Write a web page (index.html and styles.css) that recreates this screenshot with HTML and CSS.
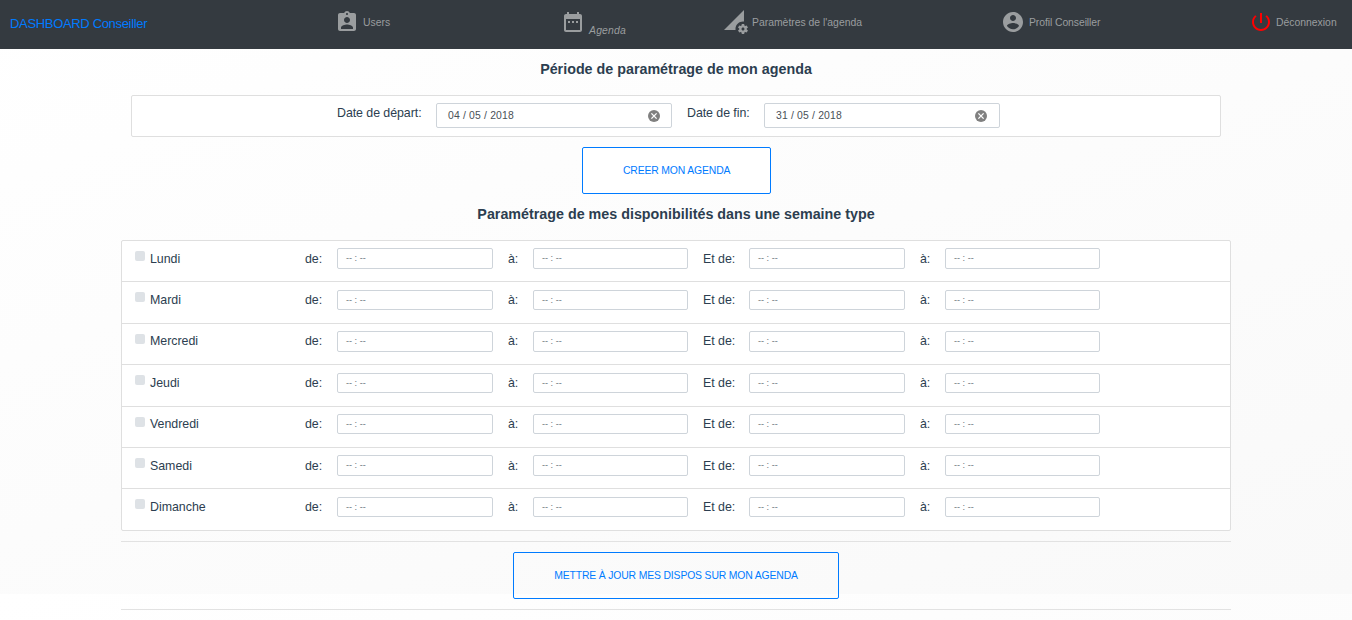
FILE: index.html
```
<!DOCTYPE html>
<html lang="fr">
<head>
<meta charset="utf-8">
<title>Dashboard Conseiller</title>
<link rel="stylesheet" href="styles.css">
</head>
<body>
<nav class="navbar">
  <a class="brand">DASHBOARD Conseiller</a>
  <a class="nav-link users"><svg class="icon" viewBox="0 0 24 24"><path d="M19 3h-4.180C14.400 1.840 13.300 1 12 1s-2.400.84-2.820 2H5c-1.100 0-2 .9-2 2v14c0 1.100.9 2 2 2h14c1.100 0 2-.9 2-2V5c0-1.100-.9-2-2-2zm-7 0c.55 0 1 .45 1 1s-.45 1-1 1-1-.45-1-1 .45-1 1-1zm0 4c1.660 0 3 1.340 3 3s-1.340 3-3 3-3-1.340-3-3 1.340-3 3-3zm6 12H6v-1.400c0-2 4-3.100 6-3.100s6 1.100 6 3.100V19z"/></svg><span>Users</span></a>
  <a class="nav-link agenda"><svg class="icon" viewBox="0 0 24 24"><path d="M9 11H7v2h2v-2zm4 0h-2v2h2v-2zm4 0h-2v2h2v-2zm2-7h-1V2h-2v2H8V2H6v2H5c-1.110 0-1.990.9-1.990 2L3 20c0 1.100.89 2 2 2h14c1.100 0 2-.9 2-2V6c0-1.100-.9-2-2-2zm0 16H5V9h14v11z"/></svg><em>Agenda</em></a>
  <a class="nav-link params"><svg class="icon" viewBox="0 0 24 24"><path d="M18.990 11.500c.34 0 .67.03 1 .07L20 0 0 20h11.560c-.04-.33-.07-.66-.07-1 0-4.140 3.360-7.500 7.500-7.500zm3.710 7.990c.02-.16.04-.32.04-.49 0-.17-.01-.33-.04-.49l1.060-.83c.09-.08.12-.21.06-.32l-1-1.730c-.06-.11-.19-.15-.31-.11l-1.240.5c-.26-.2-.54-.37-.85-.49l-.19-1.320c-.01-.12-.12-.21-.24-.21h-2c-.12 0-.23.09-.25.21l-.19 1.320c-.3.13-.59.29-.85.49l-1.240-.5c-.11-.04-.24 0-.31.11l-1 1.730c-.06.11-.04.24.06.32l1.060.83c-.02.16-.03.32-.03.49 0 .17.01.33.03.49l-1.060.83c-.09.08-.12.21-.06.32l1 1.730c.06.11.19.15.31.11l1.240-.5c.26.2.54.37.85.49l.19 1.320c.02.12.12.21.25.21h2c.12 0 .23-.09.24-.21l.19-1.320c.3-.13.59-.29.84-.49l1.250.5c.11.04.24 0 .31-.11l1-1.730c.06-.11.03-.24-.06-.32l-1.060-.83zm-3.710 1.010c-.83 0-1.500-.67-1.500-1.500s.67-1.500 1.500-1.500 1.500.67 1.500 1.500-.67 1.500-1.500 1.500z"/></svg><span>Paramètres de l'agenda</span></a>
  <a class="nav-link profil"><svg class="icon" viewBox="0 0 24 24"><path d="M12 2C6.480 2 2 6.480 2 12s4.480 10 10 10 10-4.480 10-10S17.520 2 12 2zm0 3c1.660 0 3 1.340 3 3s-1.340 3-3 3-3-1.340-3-3 1.340-3 3-3zm0 14.200c-2.500 0-4.710-1.280-6-3.220.03-1.990 4-3.080 6-3.080 1.990 0 5.970 1.090 6 3.080-1.290 1.940-3.500 3.220-6 3.220z"/></svg><span>Profil Conseiller</span></a>
  <a class="nav-link logout"><svg class="icon" viewBox="0 0 24 24"><path d="M13 3h-2v10h2V3zm4.830 2.170l-1.420 1.420C17.990 7.860 19 9.810 19 12c0 3.870-3.130 7-7 7s-7-3.130-7-7c0-2.190 1.010-4.140 2.580-5.420L6.170 5.170C4.230 6.820 3 9.260 3 12c0 4.970 4.030 9 9 9s9-4.030 9-9c0-2.740-1.230-5.180-3.170-6.830z"/></svg><span>Déconnexion</span></a>
</nav>
<main>
  <h1 class="title">Période de paramétrage de mon agenda</h1>
  <section class="card period">
    <span class="label">Date de départ:</span>
    <div class="date start"><span>04 / 05 / 2018</span><svg class="clear" viewBox="0 0 12 12"><circle cx="6" cy="6" r="6"/><path d="M3.400 3.400l5.200 5.200M8.600 3.400l-5.200 5.200"/></svg></div>
    <span class="label end">Date de fin:</span>
    <div class="date"><span>31 / 05 / 2018</span><svg class="clear" viewBox="0 0 12 12"><circle cx="6" cy="6" r="6"/><path d="M3.400 3.400l5.200 5.200M8.600 3.400l-5.200 5.200"/></svg></div>
  </section>
  <button class="btn create">CREER MON AGENDA</button>
  <h2 class="title week-title">Paramétrage de mes disponibilités dans une semaine type</h2>
  <section class="card week">
    <div class="day"><i class="check"></i><span class="name">Lundi</span><span>de:</span><div class="time">-- : --</div><span>à:</span><div class="time">-- : --</div><span>Et de:</span><div class="time">-- : --</div><span>à:</span><div class="time">-- : --</div></div>
    <div class="day"><i class="check"></i><span class="name">Mardi</span><span>de:</span><div class="time">-- : --</div><span>à:</span><div class="time">-- : --</div><span>Et de:</span><div class="time">-- : --</div><span>à:</span><div class="time">-- : --</div></div>
    <div class="day"><i class="check"></i><span class="name">Mercredi</span><span>de:</span><div class="time">-- : --</div><span>à:</span><div class="time">-- : --</div><span>Et de:</span><div class="time">-- : --</div><span>à:</span><div class="time">-- : --</div></div>
    <div class="day"><i class="check"></i><span class="name">Jeudi</span><span>de:</span><div class="time">-- : --</div><span>à:</span><div class="time">-- : --</div><span>Et de:</span><div class="time">-- : --</div><span>à:</span><div class="time">-- : --</div></div>
    <div class="day"><i class="check"></i><span class="name">Vendredi</span><span>de:</span><div class="time">-- : --</div><span>à:</span><div class="time">-- : --</div><span>Et de:</span><div class="time">-- : --</div><span>à:</span><div class="time">-- : --</div></div>
    <div class="day"><i class="check"></i><span class="name">Samedi</span><span>de:</span><div class="time">-- : --</div><span>à:</span><div class="time">-- : --</div><span>Et de:</span><div class="time">-- : --</div><span>à:</span><div class="time">-- : --</div></div>
    <div class="day"><i class="check"></i><span class="name">Dimanche</span><span>de:</span><div class="time">-- : --</div><span>à:</span><div class="time">-- : --</div><span>Et de:</span><div class="time">-- : --</div><span>à:</span><div class="time">-- : --</div></div>
  </section>
  <div class="update"><button class="btn">METTRE À JOUR MES DISPOS SUR MON AGENDA</button></div>
</main>
</body>
</html>
```
FILE: styles.css
```
* { box-sizing: border-box; }
html { background: #fff linear-gradient(160deg, #fff 0%, #f9f9f9 100%) 0 0 / 100% 594px repeat-y; }
body {
  margin: 0;
  height: 620px;
  overflow: hidden;
  color: #2c3e50;
  font: 12.4px/18px "Liberation Sans", Arial, sans-serif;
}
.navbar {
  display: grid;
  grid-template-columns: 325px 226px 163px 277px 248px 1fr;
  height: 49px;
  padding-left: 10px;
  background: #343a40;
}
.brand { padding-top: 14px; color: #007bff; font-size: 13px; line-height: 20px; letter-spacing: -0.33px; }
.nav-link {
  display: flex;
  align-items: flex-start;
  gap: 4px;
  color: #9a9d9f;
  font-size: 10.4px;
  line-height: 16px;
  white-space: nowrap;
}
.icon { flex: none; width: 24px; height: 24px; margin-top: 10px; fill: currentColor; }
.nav-link span { padding-top: 15px; }
.nav-link em { padding-top: 23px; letter-spacing: 0.2px; }
.profil { letter-spacing: -0.08px; }
.logout { gap: 3px; }
.logout .icon { fill: #f00; }

main { display: flex; flex-direction: column; width: 1110px; margin: 0 auto; }
.title { margin: 11px 0 0; text-align: center; font-size: 14.3px; line-height: 18px; font-weight: 700; }
.card { background: #fff; border: 1px solid #dfdfdf; border-radius: 2px; }
.period {
  display: flex;
  align-items: flex-start;
  height: 42px;
  margin: 17px 10px 0;
  padding: 7px 0 0 205px;
}
.label { width: 99px; margin-top: 1px; white-space: nowrap; letter-spacing: -0.06px; }
.label.end { width: 77px; margin-left: 15px; }
.date {
  display: flex;
  align-items: center;
  justify-content: space-between;
  width: 236px;
  height: 25px;
  padding: 0 12px 0 11px;
  border: 1px solid #ced4da;
  border-radius: 2px;
  color: #495057;
  font-size: 10.4px;
  letter-spacing: 0.17px;
}
.date.start { padding-right: 11px; }
.clear { width: 12px; height: 12px; margin-top: 1px; fill: #808080; stroke: #fff; stroke-width: 1.3; }
.clear circle { stroke: none; }
.btn {
  height: 47px;
  padding: 0 40px;
  border: 1px solid #007bff;
  border-radius: 2px;
  background: transparent;
  color: #007bff;
  font: 10.4px "Liberation Sans", Arial, sans-serif;
  letter-spacing: -0.15px;
  white-space: nowrap;
}
.create { align-self: center; width: 189px; margin-top: 10px; margin-left: 1px; background: #fff; }
.week-title { margin-top: 11px; }
.week { height: 291px; margin-top: 17px; }
.day {
  display: grid;
  grid-template-columns: 15px 155px 32px 171px 25px 170px 46px 171px 25px 155px;
  align-items: start;
  height: 41.400px;
  padding: 7px 0 0 13px;
  border-top: 1px solid #dfdfdf;
  line-height: 21px;
}
.day:first-child { border-top: 0; height: 40.400px; }
.day > span { padding-top: 0.6px; letter-spacing: -0.02px; }
.check { width: 10px; height: 10px; margin-top: 3px; border-radius: 2px; background: #dee2e6; }
.time {
  width: 156px;
  height: 20.400px;
  margin-top: 0.360px;
  padding-left: 8px;
  border: 1px solid #ced4da;
  border-radius: 2px;
  color: #6c757d;
  font-size: 9.100px;
  line-height: 18px;
}
.time:nth-child(6), .time:nth-child(10) { width: 155px; }
.update {
  display: flex;
  justify-content: center;
  height: 69px;
  margin-top: 10px;
  padding-top: 10px;
  border: solid #e2e2e2;
  border-width: 1px 0;
}
.update .btn { width: 326px; }
```
